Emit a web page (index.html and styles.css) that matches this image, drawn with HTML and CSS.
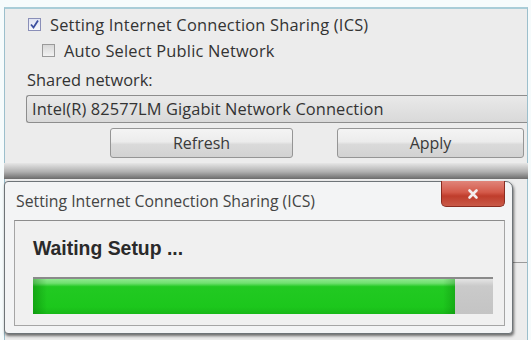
FILE: index.html
```html
<!DOCTYPE html>
<html>
<head>
<meta charset="utf-8">
<link rel="stylesheet" href="styles.css">
</head>
<body>
<div class="win">
  <div class="row r1">
    <span class="cb checked"><svg width="11" height="11" viewBox="0 0 11 11"><path d="M2 5.5 L4.5 8.5 L9 1.5" fill="none" stroke="#3b4fa0" stroke-width="1.8"/></svg></span>
    <span class="lbl">Setting Internet Connection Sharing (ICS)</span>
  </div>
  <div class="row r2">
    <span class="cb"></span>
    <span class="lbl">Auto Select Public Network</span>
  </div>
  <div class="row r3"><span class="lbl">Shared network:</span></div>
  <div class="combo">Intel(R) 82577LM Gigabit Network Connection</div>
  <div class="btns">
    <div class="btn refresh">Refresh</div>
    <div class="btn apply">Apply</div>
  </div>
  <div class="shade"></div>
  <div class="sideline"></div>
</div>
<div class="dlg">
  <div class="titlebar">
    <span class="title">Setting Internet Connection Sharing (ICS)</span>
    <div class="close"><svg width="14" height="12" viewBox="0 0 14 12"><path d="M3.5 2.5 L10.5 9.5 M10.5 2.5 L3.5 9.5" stroke="#f4eeee" stroke-width="2.6" stroke-linecap="round"/></svg></div>
  </div>
  <div class="panel">
    <div class="waiting">Waiting Setup ...</div>
    <div class="bar"><div class="fill" style="width:422px"></div></div>
  </div>
</div>
</body>
</html>
```

FILE: styles.css
```css
html, body {
  margin: 0;
  padding: 0;
}
body {
  width: 531px;
  height: 340px;
  overflow: hidden;
  background: #f6fbfc;
  position: relative;
  font-family: "Open Sans", "Noto Sans", sans-serif;
  color: #2e2e2e;
}
.win {
  margin: 7px 3px 0 4px;
  height: 333px;
  box-sizing: border-box;
  border: 1px solid #9cbfcc;
  border-top: 2px solid #a9cdd8;
  border-bottom: none;
  background: #ececec;
  padding: 3px 0 0 22px;
  position: relative;
}
.row {
  display: flex;
  align-items: center;
  height: 27px;
  font-size: 16.4px;
  letter-spacing: 0.2px;
  color: #333;
}
.r1 { padding-left: 1px; height: 25px; }
.r2 { padding-left: 15px; }
.r3 { height: 30px; padding-top: 1px; box-sizing: border-box; letter-spacing: 0; }
.cb {
  width: 11px;
  height: 11px;
  border: 1px solid #9a9a9a;
  background: linear-gradient(#d8d8d8, #f2f2f2);
  margin-right: 9px;
  display: inline-flex;
  align-items: center;
  justify-content: center;
  flex: none;
}
.cb.checked {
  border-color: #8a8fb8;
  background: linear-gradient(#dfe3f3, #f7f8fc);
}
.combo {
  margin-top: 1px;
  margin-left: -1px;
  height: 26px;
  border: 1px solid #8d8d8d;
  border-right: none;
  border-radius: 3px 0 0 3px;
  background: linear-gradient(#e9e9e9, #d9d9d9);
  font-size: 16.4px;
  letter-spacing: 0.1px;
  line-height: 26px;
  padding-left: 5px;
  color: #333;
  white-space: nowrap;
}
.btns {
  display: flex;
  margin-top: 5px;
  padding-left: 83px;
  gap: 44px;
}
.btn {
  height: 28px;
  border: 1px solid #959595;
  border-radius: 3px;
  background: linear-gradient(#f4f4f4 0%, #ececec 45%, #dadada 55%, #d2d2d2 100%);
  font-size: 16px;
  line-height: 28px;
  text-align: center;
  color: #3a3a3a;
}
.refresh { width: 181px; }
.apply { width: 185px; }
.shade {
  margin: 5px -1px 0 -23px;
  height: 16px;
  background: linear-gradient(#e6e6e6, #b0b0b0 55%, #6c6c6c);
}
.sideline {
  position: absolute;
  right: 0;
  top: 253px;
  width: 14px;
  height: 1px;
  background: #9a9a9a;
}
.dlg {
  position: absolute;
  left: 4px;
  top: 181px;
  width: 509px;
  height: 153px;
  box-sizing: border-box;
  border: 1px solid #6e7478;
  border-radius: 4px 7px 4px 4px;
  background: #f3f4f5;
  box-shadow: 1px 2px 3px rgba(0,0,0,0.55);
  padding: 0 7px 6px 9px;
}
.titlebar {
  height: 38px;
  display: flex;
  align-items: flex-start;
  position: relative;
}
.title {
  margin-top: 8px;
  margin-left: 2px;
  font-size: 15.8px;
  color: #444;
  white-space: nowrap;
}
.close {
  position: absolute;
  right: 0;
  top: -1px;
  width: 64px;
  height: 26px;
  box-sizing: border-box;
  border: 1px solid #8a2c20;
  border-top: none;
  border-radius: 0 0 5px 5px;
  background: linear-gradient(#e0857a 0%, #d45a4a 45%, #bf3d2c 60%, #c95a48 100%);
  display: flex;
  align-items: center;
  justify-content: center;
}
.panel {
  height: 106px;
  box-sizing: border-box;
  border: 1px solid #a5a5a5;
  border-top-color: #8c8c8c;
  background: #f0f0f0;
  padding: 16px 0 0 18px;
}
.waiting {
  font-family: "Liberation Sans", Arial, sans-serif;
  font-weight: bold;
  font-size: 19.4px;
  color: #2a2a2a;
  height: 22px;
  line-height: 22px;
}
.bar {
  margin-top: 18px;
  width: 460px;
  height: 37px;
  box-sizing: border-box;
  border-top: 2px solid #8a8a8a;
  background: linear-gradient(#e4e4e4 0%, #cacaca 20%, #c4c4c4 100%);
}
.fill {
  height: 100%;
  background:
    linear-gradient(90deg, rgba(0,100,0,0.35), rgba(0,0,0,0) 14px, rgba(0,0,0,0) calc(100% - 12px), rgba(0,90,0,0.25)),
    linear-gradient(#8fea8f 0%, #6fe06f 12%, #22c922 22%, #1cc71c 80%, #18b818 100%);
}
```
